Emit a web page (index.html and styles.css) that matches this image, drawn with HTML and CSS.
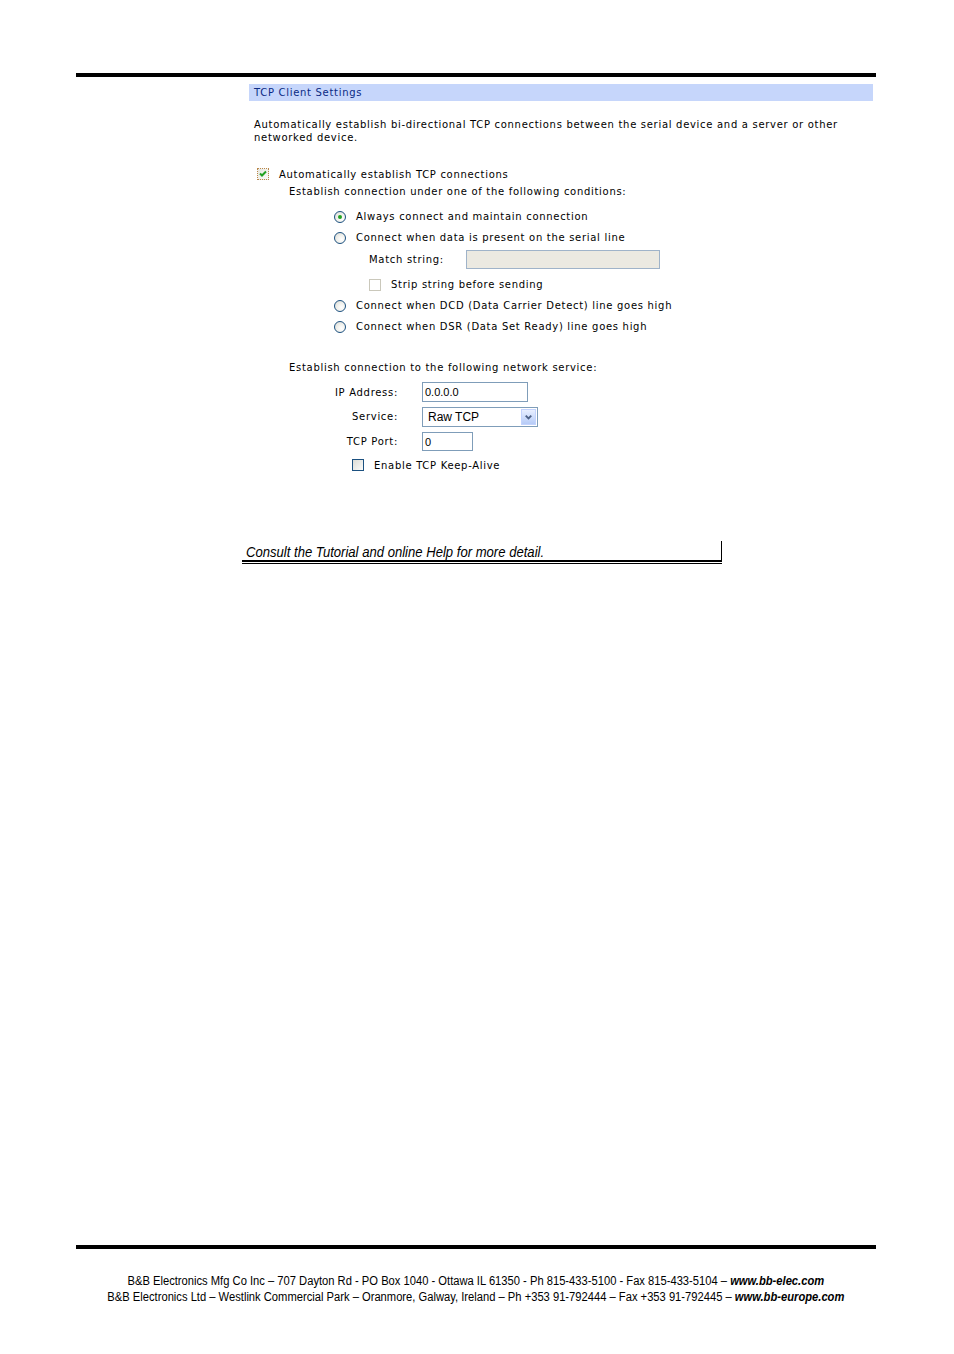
FILE: index.html
```html
<!DOCTYPE html>
<html>
<head>
<meta charset="utf-8">
<link rel="stylesheet" href="styles.css">
</head>
<body>
<div class="page">
  <div class="rule"></div>

  <div class="panel">
    <div class="panel-head">TCP Client Settings</div>
    <p class="desc">Automatically establish bi-directional TCP connections between the serial device and a server or other networked device.</p>

    <div class="row row-auto">
      <span class="cb cb-checked"><svg viewBox="0 0 12 12" width="12" height="12"><path d="M3 5.5 L5 7.5 L9 3.5" fill="none" stroke="#21a121" stroke-width="2"/></svg></span>
      <span class="lbl">Automatically establish TCP connections</span>
    </div>
    <div class="row row-text ind-40">Establish connection under one of the following conditions:</div>

    <div class="row row-radio first ind-85">
      <span class="radio radio-on"></span>
      <span class="lbl">Always connect and maintain connection</span>
    </div>
    <div class="row row-radio ind-85">
      <span class="radio"></span>
      <span class="lbl">Connect when data is present on the serial line</span>
    </div>
    <div class="row row-match ind-120">
      <span class="match-lbl">Match string:</span>
      <span class="input input-disabled match-input"></span>
    </div>
    <div class="row row-radio strip ind-120">
      <span class="cb cb-disabled"></span>
      <span class="lbl">Strip string before sending</span>
    </div>
    <div class="row row-radio ind-85">
      <span class="radio"></span>
      <span class="lbl">Connect when DCD (Data Carrier Detect) line goes high</span>
    </div>
    <div class="row row-radio ind-85">
      <span class="radio"></span>
      <span class="lbl">Connect when DSR (Data Set Ready) line goes high</span>
    </div>

    <div class="row row-text net ind-40">Establish connection to the following network service:</div>

    <div class="form ind-40">
      <span class="flabel r-ip">IP Address:</span>
      <span class="input ip-input r-ip">0.0.0.0</span>
      <span class="flabel r-svc">Service:</span>
      <span class="select r-svc">Raw TCP<span class="select-btn"><svg viewBox="0 0 14 14" width="14" height="14"><path d="M4 5.5 L7 8.5 L10 5.5" fill="none" stroke="#4d6185" stroke-width="2"/></svg></span></span>
      <span class="flabel r-port">TCP Port:</span>
      <span class="input port-input r-port">0</span>
    </div>

    <div class="row row-keep ind-103">
      <span class="cb cb-blue"></span>
      <span class="lbl">Enable TCP Keep-Alive</span>
    </div>
  </div>

  <div class="note">
    <div class="note-box"><span class="note-text">Consult the Tutorial and online Help for more detail.</span></div>
    <div class="note-line"></div>
  </div>

  <div class="spacer"></div>
  <div class="rule"></div>

  <div class="footer">
    <div>B&amp;B Electronics Mfg Co Inc – 707 Dayton Rd - PO Box 1040 - Ottawa IL 61350 - Ph 815-433-5100 - Fax 815-433-5104 – <b><i>www.bb-elec.com</i></b></div>
    <div>B&amp;B Electronics Ltd – Westlink Commercial Park – Oranmore, Galway, Ireland – Ph +353 91-792444 – Fax +353 91-792445 – <b><i>www.bb-europe.com</i></b></div>
  </div>
</div>
</body>
</html>
```

FILE: styles.css
```css
html, body {
  margin: 0;
  padding: 0;
  background: #fff;
}
.page {
  width: 800px;
  margin-left: 76px;
  padding-top: 73px;
}
.rule {
  height: 4px;
  background: #000;
}
.panel {
  margin-left: 173px;
  width: 624px;
  margin-top: 7px;
  font-family: "DejaVu Sans", Verdana, sans-serif;
  font-size: 10px;
  letter-spacing: 0.7px;
  color: #000;
}
.panel-head {
  height: 17px;
  line-height: 17px;
  background: #c6d6fb;
  color: #0a2a84;
  padding-left: 5px;
}
.desc {
  margin: 17px 0 0 0;
  padding-left: 5px;
  line-height: 13px;
  width: 600px;
}
.row {
  display: flex;
  align-items: center;
}
.lbl {
  margin-left: 10px;
}
.ind-40 { margin-left: 40px; }
.ind-85 { margin-left: 85px; }
.ind-103 { margin-left: 103px; }
.ind-120 { margin-left: 120px; }

.row-auto {
  margin-top: 20px;
  margin-left: 8px;
  height: 20px;
}
.row-text {
  height: 14px;
}
.row-radio {
  height: 21px;
}
.row-radio.first {
  margin-top: 8px;
}
.row-match {
  height: 22px;
}
.match-lbl {
  width: 97px;
}
.row-radio.strip {
  margin-top: 4px;
}
.row-text.net {
  margin-top: 23px;
}
.row-keep {
  height: 22px;
  margin-top: 1px;
}

/* checkbox / radio */
.cb {
  box-sizing: border-box;
  width: 12px;
  height: 12px;
  display: inline-block;
  flex: none;
}
.cb svg { display: block; margin: -1px; }
.cb-checked {
  border: 1px dotted #b9874a;
  background: linear-gradient(135deg, #e6e6e0, #fbfbf9);
}
.cb-disabled {
  border: 1px solid #cac8bb;
  background: #fff;
}
.cb-blue {
  border: 1px solid #1c5180;
  background: linear-gradient(135deg, #dcdcd6, #fbfbf9);
}
.radio {
  box-sizing: border-box;
  width: 12px;
  height: 12px;
  border-radius: 50%;
  border: 1px solid #1c5180;
  background: radial-gradient(circle at 65% 65%, #fff 0, #f3f3ef 40%, #d8d8d2 100%);
  display: inline-block;
  flex: none;
  position: relative;
}
.radio-on::after {
  content: "";
  position: absolute;
  left: 3px;
  top: 3px;
  width: 4px;
  height: 4px;
  border-radius: 50%;
  background: #21a121;
}

/* inputs */
.input {
  box-sizing: border-box;
  display: inline-block;
  border: 1px solid #7f9db9;
  background: #fff;
  font-family: "Liberation Sans", Arial, sans-serif;
  font-size: 11px;
  letter-spacing: 0;
  line-height: 18px;
  padding-left: 2px;
}
.input-disabled {
  background: #ebe9e1;
  border-color: #9fb3c9;
}
.match-input {
  width: 194px;
  height: 19px;
}
.form {
  display: grid;
  grid-template-columns: 109px auto;
  column-gap: 24px;
  align-items: center;
  justify-items: start;
  margin-top: 6px;
}
.flabel {
  justify-self: end;
}
.r-ip { height: 24px; display: flex; align-items: center; }
.flabel.r-svc { height: 25px; display: flex; align-items: center; }
.flabel.r-port { height: 24px; display: flex; align-items: center; }
.ip-input {
  width: 106px;
  height: 20px;
}
.port-input {
  width: 51px;
  height: 19px;
}
.select {
  box-sizing: border-box;
  width: 116px;
  height: 20px;
  border: 1px solid #7f9db9;
  font-family: "Liberation Sans", Arial, sans-serif;
  font-size: 12px;
  letter-spacing: 0;
  line-height: 18px;
  padding-left: 5px;
  position: relative;
  display: inline-block;
}
.select-btn {
  position: absolute;
  right: 1px;
  top: 1px;
  width: 15px;
  height: 16px;
  box-sizing: border-box;
  border: 1px solid #c3d3fd;
  background: linear-gradient(#e8efff, #b6cbf7);
  display: flex;
  align-items: center;
  justify-content: center;
}

/* note */
.note {
  margin-left: 166px;
  width: 480px;
  margin-top: 65px;
  font-family: "Liberation Sans", Arial, sans-serif;
}
.note-box {
  height: 19px;
  border-right: 1px solid #000;
  border-bottom: 2px solid #000;
  font-style: italic;
  font-size: 14px;
  line-height: 22px;
  padding-left: 4px;
  white-space: nowrap;
}
.note-text {
  display: inline-block;
  transform: scaleX(0.935);
  transform-origin: left center;
}
.note-line {
  margin-top: 1px;
  height: 1px;
  background: #000;
}
.spacer {
  height: 681px;
}
.footer {
  margin-top: 24px;
  text-align: center;
  font-family: "Liberation Sans", Arial, sans-serif;
  font-size: 12px;
  line-height: 16px;
  color: #000;
  white-space: nowrap;
  transform: scaleX(0.932);
  transform-origin: 398px 0;
}
```
